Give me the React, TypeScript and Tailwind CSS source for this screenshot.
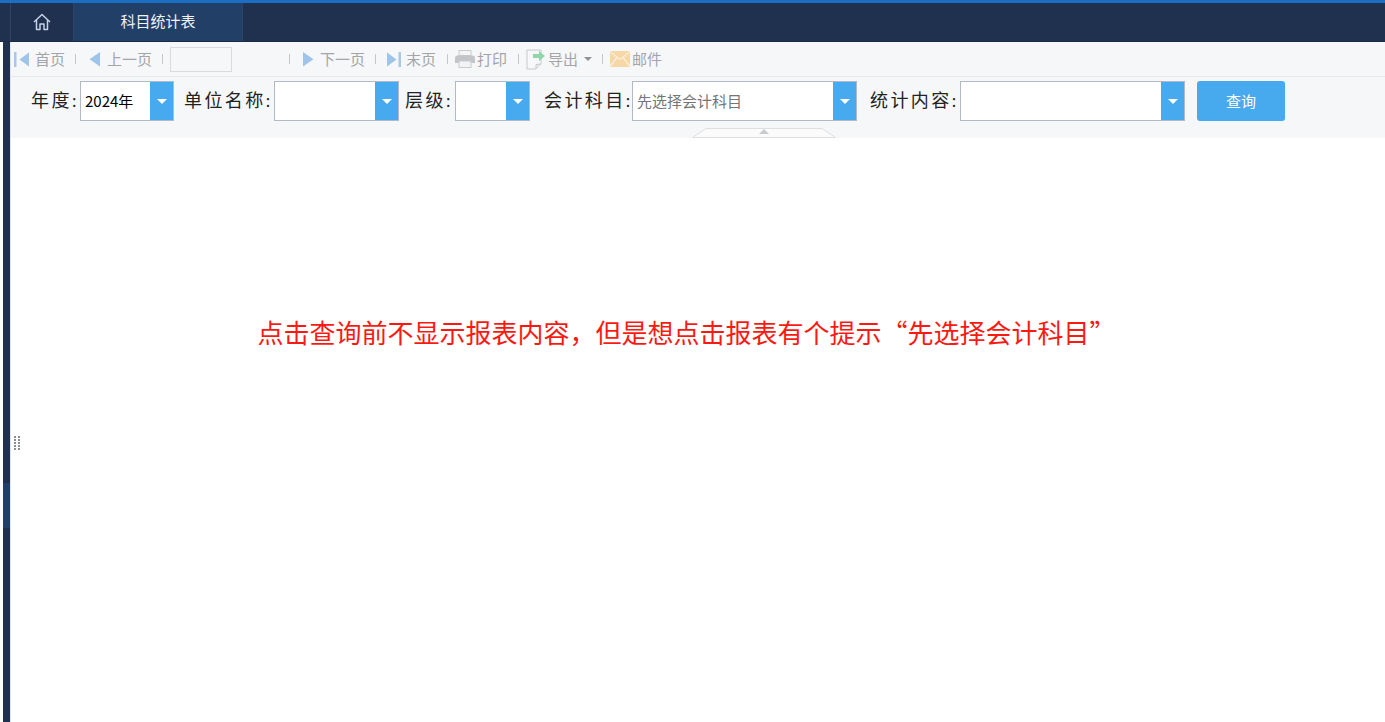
import React from "react"

const Sep = ({ className = "ml-[10px]" }: { className?: string }) => (
  <span className={`w-px h-[10px] bg-[#c4c7cc] shrink-0 ${className}`} />
)

const Arrow = ({ dir, bar }: { dir: "left" | "right"; bar?: boolean }) => (
  <svg width={bar ? 16 : 13} height="16" viewBox={bar ? "0 0 16 16" : "0 0 13 16"} className="shrink-0">
    {dir === "left" ? (
      <>
        {bar && <rect x="0" y="1" width="2.5" height="15" fill="#a9c8e8" />}
        <path d={bar ? "M15 1.5V15.5L5.5 8.5Z" : "M12 1V15.5L1.5 8.2Z"} fill="#9fc4ea" />
      </>
    ) : (
      <>
        <path d={bar ? "M1 1.5V15.5L10.5 8.5Z" : "M1 1V15.5L11.5 8.2Z"} fill="#9fc4ea" />
        {bar && <rect x="12.5" y="1" width="2.5" height="15" fill="#a9c8e8" />}
      </>
    )}
  </svg>
)

const PrintIcon = () => (
  <svg width="20" height="18" viewBox="0 0 20 18" className="shrink-0">
    <rect x="4" y="0.5" width="12" height="5" fill="#f4f5f6" stroke="#c9cbce" />
    <path d="M2 5.5H18Q20 5.5 20 8V13H0V8Q0 5.5 2 5.5Z" fill="#c3c5c8" />
    <rect x="4" y="11" width="12" height="6.5" fill="#f2f3f4" stroke="#c9cbce" />
  </svg>
)

const ExportIcon = () => (
  <svg width="20" height="21" viewBox="0 0 20 21" className="shrink-0">
    <path d="M1 1H15V15L10 20H1Z" fill="#f7f8f9" stroke="#c6c8ca" />
    <path d="M15 15L10 15.5V20" fill="#e9eaeb" stroke="#c6c8ca" />
    <path d="M7 5H13V2L19 7L13 12V9H7Z" fill="#8fd6a8" />
  </svg>
)

const MailIcon = () => (
  <svg width="20" height="16" viewBox="0 0 20 16" className="shrink-0">
    <rect x="0" y="0" width="20" height="16" rx="1.5" fill="#f6d7a6" />
    <path d="M0.5 1L10 8.5L19.5 1M0.5 15L7 6.5M19.5 15L13 6.5" fill="none" stroke="#fbeedb" strokeWidth="1.3" />
  </svg>
)

const ToolText = ({ children, className = "" }: { children: React.ReactNode; className?: string }) => (
  <span className={`text-[15px] leading-none text-[#a3a5a8] whitespace-nowrap -translate-y-px ${className}`}>
    {children}
  </span>
)

const Combo = ({
  inputWidth,
  value,
  muted
}: {
  inputWidth: string
  value?: string
  muted?: boolean
}) => (
  <div className="flex h-[40px] border border-[#b3b8c9] bg-white shrink-0">
    <div
      className={`${inputWidth} flex items-center pl-1 pb-[2px] text-[15px] leading-none whitespace-nowrap ${
        muted ? "text-[#757575]" : "text-black"
      }`}
    >
      {value}
    </div>
    <div className="w-[23px] bg-[#47a9ee] flex items-center justify-center">
      <span className="w-0 h-0 border-x-[5px] border-x-transparent border-t-[5px] border-t-white" />
    </div>
  </div>
)

const Label = ({ text, className }: { text: string; className: string }) => (
  <span
    className={`text-[18px] leading-none tracking-[2.4px] text-[#222] whitespace-nowrap shrink-0 font-['Liberation_Serif','Noto_Sans_CJK_SC',serif] ${className}`}
  >
    {text}:
  </span>
)

export default function App() {
  return (
    <div className="w-[1385px] h-[722px] overflow-hidden bg-white flex flex-col font-['Noto_Sans_CJK_SC',sans-serif]">
      <div className="h-[3px] bg-[#1a6fc4] shrink-0" />
      <div className="h-[38px] bg-[#20304f] flex shrink-0">
        <div className="w-[73px] pl-[10px] shrink-0">
          <div className="w-[63px] h-full border-l border-[#2c4468] flex items-center justify-center">
            <svg width="18" height="18" viewBox="0 0 18 18" fill="none" stroke="#c3d2e6" strokeWidth="1.5" strokeLinejoin="round" className="-ml-px">
              <path d="M1 9L9 1.5L17 9" />
              <path d="M3.5 7V16.5H7V11H11V16.5H14.5V7" />
            </svg>
          </div>
        </div>
        <div className="w-[170px] bg-[#223f68] border-x border-[#2c4468] flex items-center justify-center text-[15px] text-[#eef3fa] pb-[2px]">
          科目统计表
        </div>
      </div>
      <div className="h-px bg-[#1b2a46] shrink-0" />
      <div className="flex-1 flex min-h-0">
        <div className="w-[3px] bg-white shrink-0" />
        <div className="w-[7px] bg-[#20304f] flex flex-col shrink-0">
          <div className="h-[441px]" />
          <div className="h-[45px] bg-[#223f68]" />
        </div>
        <div className="w-px bg-[#dfe3ea] shrink-0" />
        <div className="flex-1 min-w-0 flex flex-col relative">
          <div className="h-[35px] bg-[#f6f7f9] border-b border-[#e6e7ea] flex items-center pl-[3px] shrink-0">
            <Arrow dir="left" bar />
            <ToolText className="ml-[5px]">首页</ToolText>
            <Sep />
            <span className="ml-[12px] flex">
              <Arrow dir="left" />
            </span>
            <ToolText className="ml-[6px]">上一页</ToolText>
            <Sep />
            <div className="ml-[7px] w-[62px] h-[25px] border border-[#d9dbdf] bg-[#f6f7f9] shrink-0" />
            <Sep className="ml-[57px]" />
            <span className="ml-[12px] flex">
              <Arrow dir="right" />
            </span>
            <ToolText className="ml-[5px]">下一页</ToolText>
            <Sep />
            <span className="ml-[10px] flex">
              <Arrow dir="right" bar />
            </span>
            <ToolText className="ml-[4px]">末页</ToolText>
            <Sep className="ml-[11px]" />
            <span className="ml-[7px] flex">
              <PrintIcon />
            </span>
            <ToolText className="ml-[2px]">打印</ToolText>
            <Sep className="ml-[11px]" />
            <span className="ml-[7px] flex">
              <ExportIcon />
            </span>
            <ToolText className="ml-[2px]">导出</ToolText>
            <span className="ml-[6px] w-0 h-0 border-x-[4px] border-x-transparent border-t-[4px] border-t-[#8f9194]" />
            <Sep />
            <span className="ml-[7px] flex">
              <MailIcon />
            </span>
            <ToolText className="ml-[2px]">邮件</ToolText>
          </div>
          <div className="h-[61px] bg-[#f6f7f9] flex items-start pt-[4px] pl-[20px] shrink-0">
            <div className="flex items-center h-[40px]">
              <Label text="年度" className="w-[49px]" />
              <Combo inputWidth="w-[69px]" value="2024年" />
              <Label text="单位名称" className="ml-[10px] w-[90px]" />
              <Combo inputWidth="w-[100px]" />
              <Label text="层级" className="ml-[6px] w-[50px]" />
              <Combo inputWidth="w-[50px]" />
              <Label text="会计科目" className="ml-[14px] w-[88px]" />
              <Combo inputWidth="w-[200px]" value="先选择会计科目" muted />
              <Label text="统计内容" className="ml-[13px] w-[90px]" />
              <Combo inputWidth="w-[200px]" />
              <button className="ml-[12px] w-[88px] h-[40px] rounded-[3px] bg-[#47a9ee] text-white text-[15px]">
                查询
              </button>
            </div>
          </div>
          <svg width="144" height="10" viewBox="0 0 144 10" className="absolute left-[681px] top-[86px]">
            <path d="M0.5 9.5L14 0.5H130L143.5 9.5Z" fill="#fbfbfc" stroke="#dedfe1" />
            <path d="M67 6L72 1L77 6Z" fill="#c9cbce" />
          </svg>
          <div className="flex-1 flex justify-center pt-[178px] pr-[23px] relative">
            <span className="text-[#fb1a12] text-[26px] leading-[32px] whitespace-nowrap">
              点击查询前不显示报表内容，但是想点击报表有个提示“先选择会计科目”
            </span>
            <div className="absolute left-[3px] top-[298px] w-[6px] grid grid-cols-2 gap-x-[2px] gap-y-[1px]">
              {Array.from({ length: 10 }).map((_, i) => (
                <span key={i} className="w-[2px] h-[2px] bg-[#8a8f98]" />
              ))}
            </div>
          </div>
        </div>
      </div>
    </div>
  )
}
